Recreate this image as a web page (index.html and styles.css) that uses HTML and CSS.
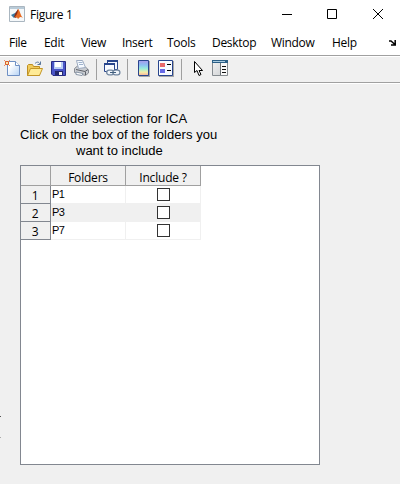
FILE: index.html
```html
<!DOCTYPE html>
<html lang="en">
<head>
<meta charset="utf-8">
<title>Figure 1</title>
<link rel="stylesheet" href="styles.css">
</head>
<body>
<div class="window">
  <header class="titlebar">
    <svg class="logo" width="16" height="16" viewBox="0 0 16 16"><path fill="#f5f8fa" stroke="#aab6c0" d="M.5.5h15v15H.5z"/><path fill="#b9cbd8" d="M1 1h14v2H1z"/><path fill="#397aa2" d="M2 9l4-2 3-3-1 5-3 3z"/><path fill="#8d2b17" d="M6 8l3-5 1 5-3 4-2-1z"/><path fill="#e76b22" d="M9 3c2 1 2 6 5 9-3-2-3-1-5 1-1-2-2-2-3-2 2-2 3-5 3-8z"/></svg>
    <span class="caption">Figure 1</span>
    <svg class="controls" width="115" height="12" viewBox="0 0 115 12" fill="none" stroke="#000"><path d="M0 6.500h10M45.500 1.500h9v9h-9zM91 1l10 10M101 1L91 11"/></svg>
  </header>
  <nav class="menu">
    <span>File</span><span>Edit</span><span>View</span><span>Insert</span><span>Tools</span><span>Desktop</span><span>Window</span><span>Help</span>
    <svg class="dock" width="8" height="6" viewBox="0 0 8 6"><path fill="none" stroke="#000" stroke-width="1.500" d="M0 1h2l4 3.500M6.200 0v5M2 5h5"/></svg>
  </nav>
  <div class="toolbar">
    <svg class="new" width="17" height="17" viewBox="0 0 17 17"><defs><linearGradient id="paper" x2="1" y2="1"><stop offset=".3" stop-color="#fff"/><stop offset="1" stop-color="#b4d2f5"/></linearGradient></defs><path fill="url(#paper)" stroke="#6f90c4" d="M3.500 1.500h8l4 4v10h-12z"/><path fill="#fff" stroke="#6f90c4" d="M11.500 1.500v4h4"/><path stroke="#e8906a" d="M0 0l6 6M6 0L0 6"/><path fill="#ffe6a8" stroke="#d9602f" d="M1.500 1.500h3v3h-3z"/></svg>
    <svg class="open" width="16" height="16" viewBox="0 0 16 16"><path fill="#f1cb5c" stroke="#bd8e22" d="M.5 14.500v-10l1-1h4l1 2h6v9z"/><path fill="#ffeb96" stroke="#c39527" d="M.5 14.500l3-7h12l-3 7z"/><path fill="none" stroke="#58779b" d="M8 2.500c2-2 4-2 5 1M10.500 3.500h3v-3"/></svg>
    <svg class="save" width="15" height="15" viewBox="0 0 15 15"><path fill="#4a55c8" stroke="#272b83" d="M.5.5h14v14H2l-1.500-1.500z"/><path fill="#b9cdf5" d="M3 1h9v7H3z"/><path fill="#fff" d="M4 1h6v5H4z"/><path fill="#23276b" d="M4 10h8v4H4z"/><path fill="#f4f5f6" d="M8 11h3v3H8z"/></svg>
    <svg class="print" width="15" height="16" viewBox="0 0 15 16"><path fill="#c9ccd1" stroke="#888c94" d="M.5 8.500l3-2.500 8 1 3 3v3l-3 2.500-11-3z"/><path fill="#f6faff" stroke="#9dabc0" d="M2.500.5h6l3 7-7 1z"/><path stroke="#9fb3cd" d="M4.500 2.500h4M5 4.500h4"/><path fill="none" stroke="#5d6168" d="M2 9.500l9 2 3-2M11.500 12v3"/><path fill="#fff" stroke="#8795a6" d="M2 12l7 1.500-1 2-6-1z"/></svg>
    <i class="sep sep1"></i>
    <svg class="link" width="17" height="17" viewBox="0 0 17 17"><path fill="#f2f6ff" stroke="#28458d" d="M3.500.5h10v9h-10z"/><path fill="#28458d" d="M3 0h11v2H3z"/><path fill="#f8faff" stroke="#28458d" d="M.5 3.500h10v8H.5z"/><path fill="#28458d" d="M0 3h11v2H0z"/><g fill="#f0f5fb" stroke="#71869f" stroke-width="1.300"><rect x="2.700" y="10.200" width="7" height="4.600" rx="2.300"/><rect x="8.900" y="10.200" width="7" height="4.600" rx="2.300"/></g><path stroke="#405e7d" d="M6 12.500h6"/></svg>
    <i class="sep sep2"></i>
    <svg class="colorbar" width="12" height="17" viewBox="0 0 12 17"><defs><linearGradient id="spectrum" x2="0" y2="1"><stop stop-color="#a99aea"/><stop offset=".3" stop-color="#8cc0f2"/><stop offset=".55" stop-color="#9aeed8"/><stop offset=".78" stop-color="#f5eda8"/><stop offset="1" stop-color="#f5b09a"/></linearGradient></defs><path fill="#a7a7a7" d="M1 1h11v16H1z"/><path fill="url(#spectrum)" stroke="#28458d" d="M.5.5h10v15H.5z"/></svg>
    <svg class="legend" width="16" height="17" viewBox="0 0 16 17"><path fill="#a7a7a7" d="M1 1h15v16H1z"/><path fill="#f7faff" stroke="#28458d" d="M.5.5h14v15H.5z"/><path fill="#e8696b" d="M2 3h5v4H2z"/><path fill="#686ae6" d="M2 9h5v4H2z"/><path stroke="#000" d="M9 4.500h4M9 10.500h4"/></svg>
    <i class="sep sep3"></i>
    <svg class="pointer" width="10" height="16" viewBox="0 0 10 16"><path fill="#fff" stroke="#000" d="M.5.5v11l2.500-2 2 5 2-1-2-4h3.500z"/></svg>
    <svg class="inspector" width="16" height="16" viewBox="0 0 16 16"><defs><linearGradient id="pane" x2="1" y2="1"><stop stop-color="#f4f4f4"/><stop offset="1" stop-color="#c9cccf"/></linearGradient></defs><path fill="url(#pane)" stroke="#858b90" d="M.5.5h15v15H.5z"/><path fill="#2b5f86" d="M0 0h16v3H0z"/><path fill="#a9cbe0" d="M1 1h12v1H1z"/><path fill="#f8f8f8" d="M9 3h6v12H9z"/><path stroke="#6b7175" d="M8.500 3v12"/><path stroke="#111" d="M10 6.500h4M10 9.500h4M10 12.500h4"/></svg>
  </div>
  <main>
    <h1><span class="l1">Folder selection for ICA</span><span class="l2">Click on the box of the folders you</span><span class="l3">want to include</span></h1>
    <section class="panel">
      <div class="grid">
        <b></b><b>Folders</b><b class="inc">Include ?</b>
        <b class="num">1</b><span>P1</span><span class="tick"><i class="box"></i></span>
        <b class="num">2</b><span class="alt">P3</span><span class="tick alt"><i class="box"></i></span>
        <b class="num">3</b><span>P7</span><span class="tick"><i class="box"></i></span>
      </div>
    </section>
  </main>
  <i class="edge"></i>
</div>
</body>
</html>
```
FILE: styles.css
```css
* { box-sizing: border-box; }
body { margin: 0; background: #f0f0f0; color: #000; font: 12px/16px "Open Sans", "Noto Sans", sans-serif; }
svg { display: block; flex: none; }
.window { position: relative; width: 400px; height: 484px; overflow: hidden; }
.titlebar { height: 29px; background: #fff; display: flex; padding: 6px 0 0 9px; }
.caption { margin: 1px 0 0 5px; width: 252px; letter-spacing: -.25px; }
.controls { margin-top: 2px; }
.menu { height: 26px; background: #fff; display: grid; grid-template-columns: 35px 37px 41px 45px 45px 59px 61px 57px 8px; padding: 6px 0 0 9px; letter-spacing: -.3px; white-space: nowrap; }
.dock { margin-top: 5px; }
.toolbar { height: 28px; border-top: 1px solid #a0a0a0; border-bottom: 1px solid #a0a0a0; box-shadow: inset 0 1px #fff, 0 1px #fff; display: flex; padding: 4px 0 0 4px; }
.open { margin-left: 6px; margin-top: 1px; }
.save { margin-left: 8px; margin-top: 1px; }
.print { margin-left: 8px; }
.sep { flex: none; width: 1px; height: 21px; margin-top: -1px; background: #a0a0a0; }
.sep1 { margin-left: 7px; }
.link { margin-left: 7px; }
.sep2 { margin-left: 6px; }
.colorbar { margin-left: 10px; }
.legend { margin-left: 8px; }
.sep3 { margin-left: 7px; }
.pointer { margin-left: 12px; margin-top: 1px; }
.inspector { margin-left: 8px; }
main { padding: 28px 0 0 20px; }
h1 { margin: 0 0 6px; width: 198px; font: 13px/16px "Liberation Sans", sans-serif; white-space: nowrap; }
h1 span { display: block; width: max-content; }
.l1 { margin-left: 32px; letter-spacing: -.03px; }
.l2 { letter-spacing: .04px; }
.l3 { margin-left: 56px; }
.panel { width: 300px; height: 300px; border: 1px solid #828790; background: #fff; }
.grid { display: grid; grid-template-columns: 30px 75px 75px; grid-template-rows: 20px 18px 18px 18px; width: 180px; }
.grid b { font-weight: 400; background: #f0f0f0; border-right: 1px solid #a0a0a0; border-bottom: 1px solid #a0a0a0; text-align: center; line-height: 23px; letter-spacing: -.2px; }
.grid .inc { letter-spacing: -.2px; }
.grid b.num { line-height: 19px; border-color: #828790; padding-right: 1px; }
.grid span { border-right: 1px solid #f0f0f0; border-bottom: 1px solid #f0f0f0; font: 11px/16px "Liberation Sans", sans-serif; padding-left: 1px; letter-spacing: -.5px; }
.grid .alt { background: #f0f0f0; }
.grid .tick { display: flex; align-items: flex-start; justify-content: center; padding: 2px 0 0; }
.box { width: 13px; height: 13px; border: 1px solid #333; background: #fff; }
.edge { position: absolute; left: 0; top: 416px; width: 1px; height: 22px; border-top: 1px solid #555; border-bottom: 1px solid #aaa; }
```
